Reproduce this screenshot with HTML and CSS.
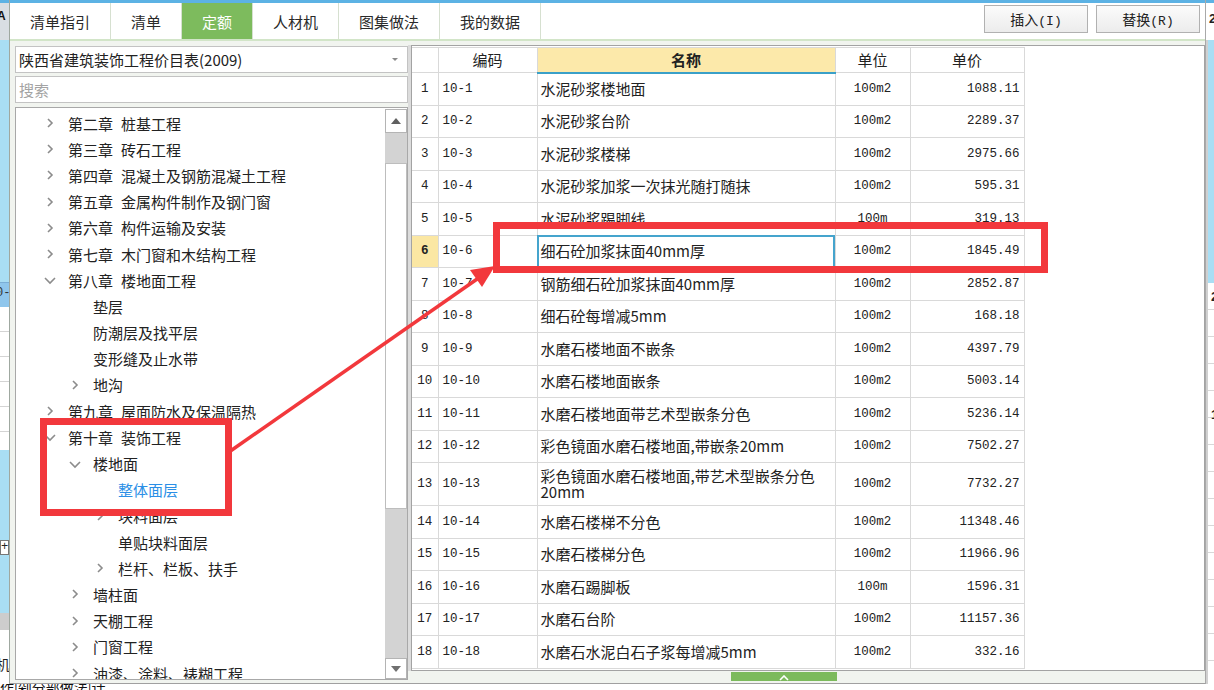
FILE: index.html
```html
<!DOCTYPE html>
<html lang="zh-CN">
<head>
<meta charset="utf-8">
<title>定额</title>
<link rel="stylesheet" href="styles.css">
</head>
<body>
<div class="page">
  <div class="main">
    <div class="strip strip-left">
      <div class="sl-top"><span class="sl-glyph">A</span></div>
      <div class="sl-blue sl-b1"></div>
      <div class="sl-sel"><span>0-</span></div>
      <div class="sl-grid"></div>
      <div class="sl-blue sl-b2"></div>
      <div class="sl-plus">+</div>
      <div class="sl-blue sl-b3"></div>
      <div class="sl-gray"></div>
      <div class="sl-white"><span class="sl-glyph2">机</span></div>
    </div>

    <div class="dialog">
      <div class="topline"></div>
      <div class="tabbar">
        <div class="tab">清单指引</div>
        <div class="tab">清单</div>
        <div class="tab active">定额</div>
        <div class="tab">人材机</div>
        <div class="tab">图集做法</div>
        <div class="tab">我的数据</div>
        <div class="tab-spacer"></div>
        <button class="btn">插入<span class="mono">(I)</span></button>
        <button class="btn">替换<span class="mono">(R)</span></button>
      </div>

      <div class="content">
        <div class="left">
          <div class="select">
            <span>陕西省建筑装饰工程价目表(2009)</span>
            <svg class="select-arrow" width="8" height="5" viewBox="0 0 8 5"><polygon points="1,1 7,1 4,4" fill="#8a8a8a"/></svg>
          </div>
          <div class="search">搜索</div>
          <div class="tree">
            <div class="tree-list">
              <div class="node l1"><span class="chev"><svg width="14" height="14" viewBox="0 0 14 14"><polyline points="5,3 9,7 5,11" class="ch"/></svg></span><span class="ch-no">第二章</span>桩基工程</div>
              <div class="node l1"><span class="chev"><svg width="14" height="14" viewBox="0 0 14 14"><polyline points="5,3 9,7 5,11" class="ch"/></svg></span><span class="ch-no">第三章</span>砖石工程</div>
              <div class="node l1"><span class="chev"><svg width="14" height="14" viewBox="0 0 14 14"><polyline points="5,3 9,7 5,11" class="ch"/></svg></span><span class="ch-no">第四章</span>混凝土及钢筋混凝土工程</div>
              <div class="node l1"><span class="chev"><svg width="14" height="14" viewBox="0 0 14 14"><polyline points="5,3 9,7 5,11" class="ch"/></svg></span><span class="ch-no">第五章</span>金属构件制作及钢门窗</div>
              <div class="node l1"><span class="chev"><svg width="14" height="14" viewBox="0 0 14 14"><polyline points="5,3 9,7 5,11" class="ch"/></svg></span><span class="ch-no">第六章</span>构件运输及安装</div>
              <div class="node l1"><span class="chev"><svg width="14" height="14" viewBox="0 0 14 14"><polyline points="5,3 9,7 5,11" class="ch"/></svg></span><span class="ch-no">第七章</span>木门窗和木结构工程</div>
              <div class="node l1"><span class="chev"><svg width="14" height="14" viewBox="0 0 14 14"><polyline points="2,5 7,10 12,5" class="ch"/></svg></span><span class="ch-no">第八章</span>楼地面工程</div>
              <div class="node l2"><span class="chev"></span>垫层</div>
              <div class="node l2"><span class="chev"></span>防潮层及找平层</div>
              <div class="node l2"><span class="chev"></span>变形缝及止水带</div>
              <div class="node l2"><span class="chev"><svg width="14" height="14" viewBox="0 0 14 14"><polyline points="5,3 9,7 5,11" class="ch"/></svg></span>地沟</div>
              <div class="node l1"><span class="chev"><svg width="14" height="14" viewBox="0 0 14 14"><polyline points="5,3 9,7 5,11" class="ch"/></svg></span><span class="ch-no">第九章</span>屋面防水及保温隔热</div>
              <div class="node l1"><span class="chev"><svg width="14" height="14" viewBox="0 0 14 14"><polyline points="2,5 7,10 12,5" class="ch"/></svg></span><span class="ch-no">第十章</span>装饰工程</div>
              <div class="node l2"><span class="chev"><svg width="14" height="14" viewBox="0 0 14 14"><polyline points="2,5 7,10 12,5" class="ch"/></svg></span>楼地面</div>
              <div class="node l3 selected"><span class="chev"></span>整体面层</div>
              <div class="node l3"><span class="chev"><svg width="14" height="14" viewBox="0 0 14 14"><polyline points="5,3 9,7 5,11" class="ch"/></svg></span>块料面层</div>
              <div class="node l3"><span class="chev"></span>单贴块料面层</div>
              <div class="node l3"><span class="chev"><svg width="14" height="14" viewBox="0 0 14 14"><polyline points="5,3 9,7 5,11" class="ch"/></svg></span>栏杆、栏板、扶手</div>
              <div class="node l2"><span class="chev"><svg width="14" height="14" viewBox="0 0 14 14"><polyline points="5,3 9,7 5,11" class="ch"/></svg></span>墙柱面</div>
              <div class="node l2"><span class="chev"><svg width="14" height="14" viewBox="0 0 14 14"><polyline points="5,3 9,7 5,11" class="ch"/></svg></span>天棚工程</div>
              <div class="node l2"><span class="chev"><svg width="14" height="14" viewBox="0 0 14 14"><polyline points="5,3 9,7 5,11" class="ch"/></svg></span>门窗工程</div>
              <div class="node l2"><span class="chev"><svg width="14" height="14" viewBox="0 0 14 14"><polyline points="5,3 9,7 5,11" class="ch"/></svg></span>油漆、涂料、裱糊工程</div>
            </div>
            <div class="scrollbar">
              <div class="sb-btn"><svg width="12" height="8" viewBox="0 0 12 8"><polygon points="1,7 11,7 6,1" fill="#606060"/></svg></div>
              <div class="sb-track"><div class="sb-thumb"></div></div>
              <div class="sb-btn sb-down"><svg width="12" height="8" viewBox="0 0 12 8"><polygon points="1,1 11,1 6,7" fill="#707070"/></svg></div>
            </div>
          </div>
        </div>

        <div class="right">
          <div class="grid-box">
            <table class="grid">
              <colgroup>
                <col class="c-no"><col class="c-code"><col class="c-name"><col class="c-unit"><col class="c-price">
              </colgroup>
              <thead>
                <tr>
                  <th></th><th>编码</th><th class="th-name">名称</th><th>单位</th><th>单价</th>
                </tr>
              </thead>
              <tbody>
                <tr><td class="no">1</td><td class="code">10-1</td><td class="name">水泥砂浆楼地面</td><td class="unit">100m2</td><td class="price">1088.11</td></tr>
                <tr><td class="no">2</td><td class="code">10-2</td><td class="name">水泥砂浆台阶</td><td class="unit">100m2</td><td class="price">2289.37</td></tr>
                <tr><td class="no">3</td><td class="code">10-3</td><td class="name">水泥砂浆楼梯</td><td class="unit">100m2</td><td class="price">2975.66</td></tr>
                <tr><td class="no">4</td><td class="code">10-4</td><td class="name">水泥砂浆加浆一次抹光随打随抹</td><td class="unit">100m2</td><td class="price">595.31</td></tr>
                <tr><td class="no">5</td><td class="code">10-5</td><td class="name">水泥砂浆踢脚线</td><td class="unit">100m</td><td class="price">319.13</td></tr>
                <tr class="current"><td class="no">6</td><td class="code">10-6</td><td class="name focus">细石砼加浆抹面40mm厚</td><td class="unit">100m2</td><td class="price">1845.49</td></tr>
                <tr><td class="no">7</td><td class="code">10-7</td><td class="name">钢筋细石砼加浆抹面40mm厚</td><td class="unit">100m2</td><td class="price">2852.87</td></tr>
                <tr><td class="no">8</td><td class="code">10-8</td><td class="name">细石砼每增减5mm</td><td class="unit">100m2</td><td class="price">168.18</td></tr>
                <tr><td class="no">9</td><td class="code">10-9</td><td class="name">水磨石楼地面不嵌条</td><td class="unit">100m2</td><td class="price">4397.79</td></tr>
                <tr><td class="no">10</td><td class="code">10-10</td><td class="name">水磨石楼地面嵌条</td><td class="unit">100m2</td><td class="price">5003.14</td></tr>
                <tr><td class="no">11</td><td class="code">10-11</td><td class="name">水磨石楼地面带艺术型嵌条分色</td><td class="unit">100m2</td><td class="price">5236.14</td></tr>
                <tr><td class="no">12</td><td class="code">10-12</td><td class="name">彩色镜面水磨石楼地面,带嵌条20mm</td><td class="unit">100m2</td><td class="price">7502.27</td></tr>
                <tr class="tall"><td class="no">13</td><td class="code">10-13</td><td class="name">彩色镜面水磨石楼地面,带艺术型嵌条分色20mm</td><td class="unit">100m2</td><td class="price">7732.27</td></tr>
                <tr><td class="no">14</td><td class="code">10-14</td><td class="name">水磨石楼梯不分色</td><td class="unit">100m2</td><td class="price">11348.46</td></tr>
                <tr><td class="no">15</td><td class="code">10-15</td><td class="name">水磨石楼梯分色</td><td class="unit">100m2</td><td class="price">11966.96</td></tr>
                <tr><td class="no">16</td><td class="code">10-16</td><td class="name">水磨石踢脚板</td><td class="unit">100m</td><td class="price">1596.31</td></tr>
                <tr><td class="no">17</td><td class="code">10-17</td><td class="name">水磨石台阶</td><td class="unit">100m2</td><td class="price">11157.36</td></tr>
                <tr><td class="no">18</td><td class="code">10-18</td><td class="name">水磨石水泥白石子浆每增减5mm</td><td class="unit">100m2</td><td class="price">332.16</td></tr>
              </tbody>
            </table>
          </div>
          <div class="collapse-tab"><svg width="10" height="6" viewBox="0 0 10 6"><polyline points="1,5 5,1 9,5" fill="none" stroke="#ffffff" stroke-width="1.6"/></svg></div>
        </div>
      </div>
    </div>

    <div class="strip strip-right">
      <div class="sr-top"><span class="sr-glyph">2</span></div>
      <div class="sr-blue"></div>
      <div class="sr-grid"><span class="sr-d1">2</span><span class="sr-d2">1</span></div>
    </div>
  </div>
  <div class="bottom-strip"><span>作|剁分部做法|计</span></div>
</div>

<svg class="annot" width="1214" height="690" viewBox="0 0 1214 690">
  <rect x="43.5" y="421.5" width="185" height="91" fill="none" stroke="#f2383c" stroke-width="7"/>
  <rect x="496.5" y="225.5" width="548" height="44" fill="none" stroke="#f2383c" stroke-width="7"/>
  <line x1="229" y1="452" x2="480" y2="277" stroke="#f2383c" stroke-width="3.5"/>
  <polygon points="495,266 482,287 470,270" fill="#f2383c"/>
</svg>
</body>
</html>
```

FILE: styles.css
```css
* { box-sizing: border-box; }

html, body {
  margin: 0;
  padding: 0;
}

body {
  width: 1214px;
  height: 690px;
  overflow: hidden;
  position: relative;
  background: #ffffff;
  font-family: "Noto Sans CJK SC", "Microsoft YaHei", sans-serif;
  font-size: 15px;
  color: #222222;
}

.page {
  display: flex;
  flex-direction: column;
  height: 690px;
}

.main {
  display: flex;
  height: 684px;
}

/* ---------- background app strips ---------- */
.strip {
  display: flex;
  flex-direction: column;
  overflow: hidden;
}

.strip-left {
  width: 9px;
  border-top: 3px solid #5cb2e4;
}

.sl-top {
  height: 37px;
  background: #d9dee3;
  position: relative;
}
.sl-glyph {
  position: absolute;
  left: -3px;
  top: 6px;
  font-family: "Liberation Sans", sans-serif;
  font-weight: bold;
  font-size: 12px;
  color: #111;
}
.sl-blue { background: #a9def4; }
.sl-b1 { height: 242px; }
.sl-sel {
  height: 25px;
  background: #8fc6ec;
  position: relative;
  border-top: 1px solid #7aaed6;
}
.sl-sel span {
  position: absolute;
  left: -4px;
  top: 3px;
  font-family: "Liberation Mono", monospace;
  font-size: 12px;
  color: #333;
}
.sl-grid {
  height: 143px;
  background: repeating-linear-gradient(#ffffff 0, #ffffff 24px, #d4d4d4 24px, #d4d4d4 25px);
}
.sl-b2 { height: 90px; }
.sl-plus {
  height: 15px;
  background: #ffffff;
  border: 1px solid #777;
  font-family: "Liberation Mono", monospace;
  font-size: 12px;
  line-height: 12px;
  text-align: right;
  color: #222;
}
.sl-b3 { height: 58px; }
.sl-gray { height: 17px; background: #cdcdcd; }
.sl-white {
  flex: 1;
  background: #ffffff;
  position: relative;
}
.sl-glyph2 {
  position: absolute;
  left: -4px;
  top: 24px;
  font-size: 14px;
  color: #222;
}

.strip-right {
  width: 8px;
  border-top: 3px solid #5cb2e4;
}
.sr-top {
  height: 37px;
  background: #ffffff;
  position: relative;
}
.sr-glyph, .sr-d1, .sr-d2 {
  position: absolute;
  left: 3px;
  font-family: "Liberation Sans", sans-serif;
  font-weight: bold;
  font-size: 13px;
  color: #222;
}
.sr-glyph { top: 8px; }
.sr-blue {
  height: 243px;
  background: #a9def4;
  border-left: 2px solid #d0d0d0;
}
.sr-grid {
  flex: 1;
  position: relative;
  border-left: 2px solid #d0d0d0;
  background: repeating-linear-gradient(#ffffff 0, #ffffff 26px, #d8d8d8 26px, #d8d8d8 27px);
}
.sr-d1 { top: 6px; }
.sr-d2 { top: 124px; }

/* ---------- dialog ---------- */
.dialog {
  width: 1197px;
  display: flex;
  flex-direction: column;
  background: #f1f4ef;
  border-left: 1px solid #9fa8a0;
  border-right: 1px solid #a9a9a9;
  border-bottom: 1px solid #a0a0a0;
}

.topline {
  height: 3px;
  background: #5cb2e4;
}

.tabbar {
  height: 38px;
  display: flex;
  align-items: stretch;
  background: #ffffff;
  border-bottom: 2px solid #d2e5c8;
}

.tab {
  display: flex;
  align-items: center;
  padding: 0 20px;
  border-right: 1px solid #d6e0d0;
  color: #2a2a2a;
  font-size: 15px;
  white-space: nowrap;
}
.tab.active {
  background: #7dbb5d;
  color: #ffffff;
}

.tab-spacer { flex: 1; }

.btn {
  align-self: flex-start;
  margin-top: 2px;
  margin-left: 8px;
  width: 104px;
  height: 28px;
  border: 1px solid #b1b1b1;
  background: linear-gradient(#fbfbfb, #ececec);
  font-family: "Noto Sans CJK SC", sans-serif;
  font-size: 14px;
  color: #222;
  padding: 0;
}
.btn:last-child { margin-right: 5px; }
.mono {
  font-family: "Liberation Mono", monospace;
  font-size: 13px;
}

.content {
  flex: 1;
  display: flex;
  min-height: 0;
}

/* ---------- left panel ---------- */
.left {
  width: 398px;
  padding: 5px 0 0 5px;
  display: flex;
  flex-direction: column;
}

.select {
  height: 27px;
  background: #ffffff;
  border: 1px solid #c3c3c3;
  display: flex;
  align-items: center;
  justify-content: space-between;
  padding: 0 8px 0 3px;
  font-size: 15px;
  color: #222;
}

.search {
  margin-top: 3px;
  height: 27px;
  background: #ffffff;
  border: 1px solid #c3c3c3;
  display: flex;
  align-items: center;
  padding-left: 3px;
  color: #a3a3a3;
  font-size: 15px;
}

.tree {
  margin-top: 4px;
  height: 573px;
  background: #ffffff;
  border: 1px solid #a8a8a8;
  display: flex;
}

.tree-list {
  flex: 1;
  overflow: hidden;
  padding-top: 2px;
}

.node {
  height: 26.2px;
  display: flex;
  align-items: center;
  white-space: nowrap;
  font-size: 15px;
  color: #222;
}
.node.l1 { padding-left: 27px; }
.node.l2 { padding-left: 52px; }
.node.l3 { padding-left: 77px; }
.node.selected { color: #2b8fe6; }

.ch-no { margin-right: 8px; }

.chev {
  width: 14px;
  height: 14px;
  margin-right: 11px;
  flex: none;
  display: flex;
}
.ch {
  fill: none;
  stroke: #8c8c8c;
  stroke-width: 1.6;
}

.scrollbar {
  width: 22px;
  display: flex;
  flex-direction: column;
  background: #d3d3d3;
  margin: 1px 0 0 0;
}
.sb-btn {
  height: 24px;
  background: #ffffff;
  border: 1px solid #b4b4b4;
  display: flex;
  align-items: center;
  justify-content: center;
}
.sb-down { height: 21px; }
.sb-track {
  flex: 1;
  padding-top: 30px;
}
.sb-thumb {
  height: 346px;
  background: #ffffff;
  border: 1px solid #bdbdbd;
}

/* ---------- right panel ---------- */
.right {
  width: 794px;
  margin-left: 3px;
  padding-top: 4px;
  display: flex;
  flex-direction: column;
}

.grid-box {
  height: 626px;
  background: #ffffff;
  border: 1px solid #a3a3a3;
  box-shadow: -3px 0 0 #dcdcdc;
  padding-top: 1px;
  overflow: hidden;
}

.grid {
  border-collapse: collapse;
  table-layout: fixed;
  width: 612px;
}
.c-no { width: 26px; }
.c-code { width: 99px; }
.c-name { width: 298px; }
.c-unit { width: 75px; }
.c-price { width: 114px; }

.grid th {
  height: 25px;
  font-weight: normal;
  font-size: 15px;
  color: #222;
  border: 1px solid #d9d9d9;
  border-left: none;
  text-align: center;
  padding: 0;
  line-height: 20px;
}
.grid th.th-name {
  background: #fce9aa;
  font-weight: bold;
  border-bottom: 2px solid #3aa0c8;
}

.grid td {
  height: 32.5px;
  border: 1px solid #d9d9d9;
  border-left: none;
  padding: 0 3px;
  vertical-align: middle;
  line-height: 16px;
  font-size: 15px;
  color: #222;
}
.grid tr.tall td { height: 43px; }

.grid td.no {
  text-align: center;
  padding: 0;
  font-family: "Liberation Mono", monospace;
  font-size: 12.5px;
}
.grid td.code {
  padding-left: 4px;
  font-family: "Liberation Mono", monospace;
  font-size: 12.5px;
}
.grid td.name { padding-left: 3px; }
.grid td.unit {
  text-align: center;
  font-family: "Liberation Mono", monospace;
  font-size: 12.5px;
}
.grid td.price {
  text-align: right;
  padding-right: 4px;
  font-family: "Liberation Mono", monospace;
  font-size: 12.5px;
}

.grid tr.current td.no {
  background: #fbe7a3;
  font-weight: bold;
}
.grid td.focus {
  outline: 2px solid #45a4cd;
  outline-offset: -2px;
}

.collapse-tab {
  margin-left: 320px;
  margin-top: 1px;
  width: 106px;
  height: 9px;
  background: #7cba5c;
  display: flex;
  align-items: flex-end;
  justify-content: center;
}

/* ---------- bottom strip ---------- */
.bottom-strip {
  height: 6px;
  background: #ffffff;
  position: relative;
  overflow: hidden;
}
.bottom-strip span {
  position: absolute;
  left: 0;
  top: -7px;
  font-size: 14px;
  color: #111;
  white-space: nowrap;
}

/* ---------- annotation overlay ---------- */
.annot {
  position: absolute;
  left: 0;
  top: 0;
  pointer-events: none;
}
```
